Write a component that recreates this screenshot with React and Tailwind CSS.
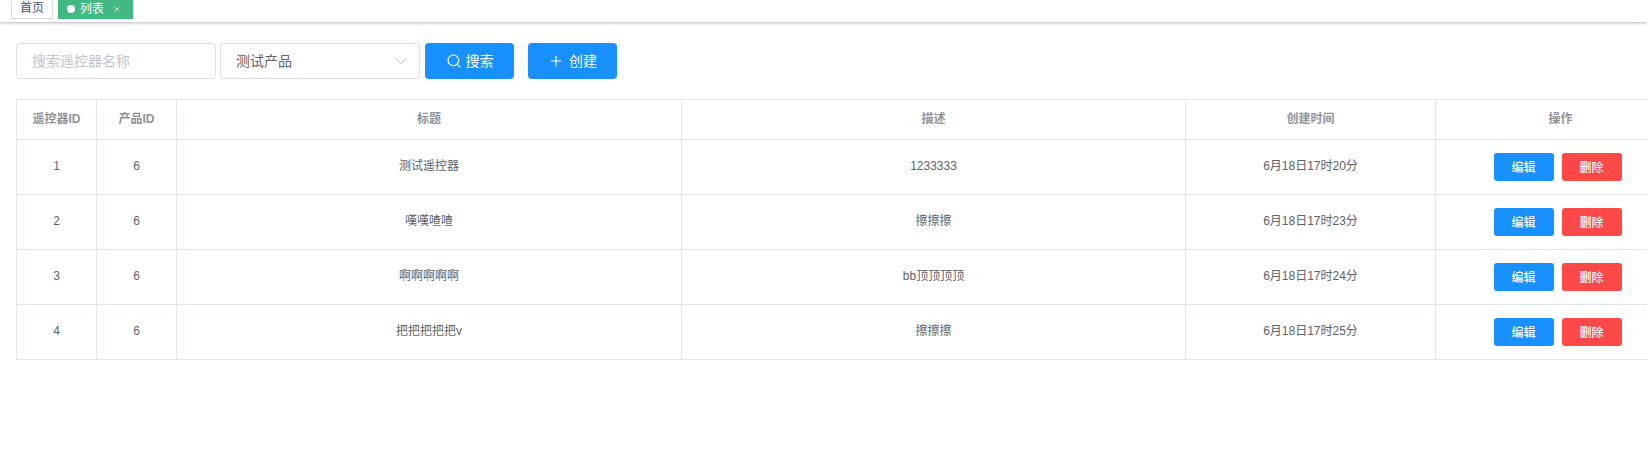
import { ChevronDown, Plus, Search, X } from "lucide-react";

const FONT = "font-['Liberation_Sans','Noto_Sans_CJK_SC',sans-serif]";

const ROWS = [
  { id: 1, product: 6, title: "测试遥控器", desc: "1233333", time: "6月18日17时20分" },
  { id: 2, product: 6, title: "嘆嘆喳喳", desc: "擦擦擦", time: "6月18日17时23分" },
  { id: 3, product: 6, title: "啊啊啊啊啊", desc: "bb顶顶顶顶", time: "6月18日17时24分" },
  { id: 4, product: 6, title: "把把把把把v", desc: "擦擦擦", time: "6月18日17时25分" },
];

const HEAD = ["遥控器ID", "产品ID", "标题", "描述", "创建时间", "操作"];

function TabBar() {
  return (
    <div className="flex h-[22px] items-end gap-[5px] pb-[3px] pl-[11px] shadow-[0_1px_3px_rgba(0,21,41,0.3)]">
      <div className="flex h-[19px] w-[42px] items-center justify-center border border-t-0 border-[#d8dce5] pb-[2px] text-xs text-[#495060]">
        首页
      </div>
      <div className="flex h-[19px] w-[75px] items-center bg-[#42b983] pb-[2px] pl-[9px] text-xs text-white">
        <span className="mr-[5px] h-2 w-2 rounded-full bg-white" />
        列表
        <X className="ml-[9px] h-2 w-2" strokeWidth={2.5} />
      </div>
    </div>
  );
}

function Toolbar() {
  return (
    <div className="flex items-center pl-4 pt-[21px]">
      <input
        placeholder="搜索遥控器名称"
        className="h-9 w-[200px] rounded border border-[#dcdfe6] px-[15px] text-sm placeholder:text-[#c0c4cc]"
      />
      <div className="ml-1 flex h-9 w-[200px] items-center justify-between rounded border border-[#dcdfe6] pl-[15px] pr-2 text-sm text-[#606266]">
        测试产品
        <ChevronDown className="h-5 w-5 text-[#c0c4cc]" strokeWidth={1.25} />
      </div>
      <button className="ml-[5px] flex h-9 w-[89px] items-center justify-center gap-1 rounded bg-[#1890ff] text-sm text-white">
        <Search className="h-4 w-4" strokeWidth={1.75} />
        搜索
      </button>
      <button className="ml-[14px] flex h-9 w-[89px] items-center justify-center gap-[5px] rounded bg-[#1890ff] text-sm text-white">
        <Plus className="h-4 w-4" strokeWidth={1.75} />
        创建
      </button>
    </div>
  );
}

function DataTable() {
  return (
    <div className="mt-5 pl-4">
      <table className="w-[1669px] table-fixed border-collapse text-center text-xs">
        <colgroup>
          <col className="w-[80px]" />
          <col className="w-[80px]" />
          <col className="w-[505px]" />
          <col className="w-[504px]" />
          <col className="w-[250px]" />
          <col className="w-[250px]" />
        </colgroup>
        <thead>
          <tr className="h-10">
            {HEAD.map((label) => (
              <th key={label} className="border border-[#dfe6ec] pb-[2px] font-bold text-[#909399]">
                {label}
              </th>
            ))}
          </tr>
        </thead>
        <tbody>
          {ROWS.map((row) => (
            <tr key={row.id} className="h-[55px] text-[#606266]">
              <td className="border border-[#dfe6ec] pb-[2px]">{row.id}</td>
              <td className="border border-[#dfe6ec] pb-[2px]">{row.product}</td>
              <td className="border border-[#dfe6ec] pb-[2px]">{row.title}</td>
              <td className="border border-[#dfe6ec] pb-[2px]">{row.desc}</td>
              <td className="border border-[#dfe6ec] pb-[2px]">{row.time}</td>
              <td className="border border-[#dfe6ec]">
                <div className="flex justify-center gap-2 pr-[6px]">
                  <button className="h-7 w-[60px] rounded-[3px] bg-[#1890ff] pt-[2px] text-xs font-medium text-white">编辑</button>
                  <button className="h-7 w-[60px] rounded-[3px] bg-[#ff4949] pt-[2px] text-xs font-medium text-white">删除</button>
                </div>
              </td>
            </tr>
          ))}
        </tbody>
      </table>
    </div>
  );
}

export default function App() {
  return (
    <div className={`h-[462px] w-full overflow-hidden bg-white ${FONT}`}>
      <TabBar />
      <Toolbar />
      <DataTable />
    </div>
  );
}
